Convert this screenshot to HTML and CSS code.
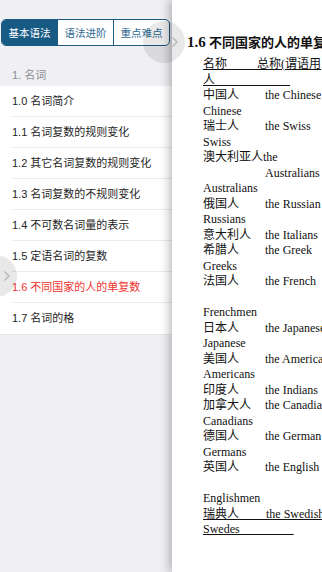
FILE: index.html
```html
<!DOCTYPE html>
<html lang="zh">
<head>
    <meta charset="UTF-8">
    <title>基本语法 - 名词</title>
    <link rel="stylesheet" href="styles.css">
</head>
<body>
    <div class="app">
        <aside class="menu">
            <div class="tabs">
                <span class="tab active">基本语法</span>
                <span class="tab">语法进阶</span>
                <span class="tab">重点难点</span>
            </div>
            <div class="group">1. 名词</div>
            <ul class="list">
                <li>1.0 名词简介</li>
                <li>1.1 名词复数的规则变化</li>
                <li>1.2 其它名词复数的规则变化</li>
                <li>1.3 名词复数的不规则变化</li>
                <li>1.4 不可数名词量的表示</li>
                <li>1.5 定语名词的复数</li>
                <li class="current">1.6 不同国家的人的单复数</li>
                <li>1.7 名词的格</li>
            </ul>
        </aside>

        <main class="page">
            <h2><span class="num">1.6</span> 不同国家的人的单复数</h2>
            <div class="lines">
                <div><span class="u">名称&nbsp;&nbsp;&nbsp;&nbsp;&nbsp;&nbsp;&nbsp;&nbsp;&nbsp;&nbsp;总称(谓语用</span></div>
                <div><span class="u">人&nbsp;&nbsp;&nbsp;&nbsp;&nbsp;&nbsp;&nbsp;&nbsp;&nbsp;&nbsp;&nbsp;&nbsp;&nbsp;&nbsp;&nbsp;&nbsp;&nbsp;&nbsp;&nbsp;&nbsp;&nbsp;&nbsp;&nbsp;&nbsp;&nbsp;</span></div>
                <div><span class="cn">中国人</span>the Chinese</div>
                <div>Chinese</div>
                <div><span class="cn">瑞士人</span>the Swiss</div>
                <div>Swiss</div>
                <div>澳大利亚人the</div>
                <div class="indent">Australians</div>
                <div>Australians</div>
                <div><span class="cn">俄国人</span>the Russian</div>
                <div>Russians</div>
                <div><span class="cn">意大利人</span>the Italians</div>
                <div><span class="cn">希腊人</span>the Greek</div>
                <div>Greeks</div>
                <div><span class="cn">法国人</span>the French</div>
                <div>&nbsp;</div>
                <div>Frenchmen</div>
                <div><span class="cn">日本人</span>the Japanese</div>
                <div>Japanese</div>
                <div><span class="cn">美国人</span>the American</div>
                <div>Americans</div>
                <div><span class="cn">印度人</span>the Indians</div>
                <div><span class="cn">加拿大人</span>the Canadians</div>
                <div>Canadians</div>
                <div><span class="cn">德国人</span>the German</div>
                <div>Germans</div>
                <div><span class="cn">英国人</span>the English</div>
                <div>&nbsp;</div>
                <div>Englishmen</div>
                <div><span class="u">瑞典人&nbsp;&nbsp;&nbsp;&nbsp;&nbsp;&nbsp;&nbsp;&nbsp;&nbsp;the Swedish</span></div>
                <div><span class="u">Swedes&nbsp;&nbsp;&nbsp;&nbsp;&nbsp;&nbsp;&nbsp;&nbsp;&nbsp;&nbsp;&nbsp;&nbsp;&nbsp;&nbsp;&nbsp;&nbsp;&nbsp;&nbsp;</span></div>
            </div>
        </main>

        <!-- drag handles -->
        <span class="handle handle-top">
            <svg width="8" height="12" viewBox="0 0 8 12"><path d="M1.5 1.5 L6 6 L1.5 10.5" fill="none" stroke="#b3b3b3" stroke-width="1.3"/></svg>
        </span>
        <span class="handle handle-side">
            <svg width="8" height="12" viewBox="0 0 8 12"><path d="M1.5 1.5 L6 6 L1.5 10.5" fill="none" stroke="#b3b3b3" stroke-width="1.3"/></svg>
        </span>
    </div>
</body>
</html>
```

FILE: styles.css
```css
html, body {
    margin: 0;
    padding: 0;
}
body {
    font-family: 'Liberation Sans', 'Noto Sans CJK SC', sans-serif;
    background-color: #efeff4;
    overflow: hidden;
}
.app {
    position: relative;
    display: flex;
    width: 322px;
    height: 572px;
    overflow: hidden;
}
.menu {
    flex: none;
    width: 172px;
    background-color: #efeff4;
}
.tabs {
    display: flex;
    margin: 19px 2px 0 1px;
    height: 27px;
    border: 1px solid #1c5b84;
    border-radius: 5px;
    overflow: hidden;
    box-sizing: border-box;
    background-color: white;
}
.tab {
    flex: 1;
    display: flex;
    align-items: center;
    justify-content: center;
    font-size: 10.5px;
    color: #2f6a92;
    border-left: 1px solid #1c5b84;
}
.tab:first-child {
    border-left: none;
}
.tab.active {
    background-color: #175b85;
    color: white;
}
.group {
    height: 40px;
    box-sizing: border-box;
    padding: 22px 0 0 12px;
    font-size: 11px;
    line-height: 14px;
    color: #8e8e93;
}
.list {
    list-style: none;
    margin: 0;
    padding: 0 0 0 12px;
    background-color: white;
    border-bottom: 1px solid #e3e3e6;
}
.list li {
    height: 31px;
    line-height: 31px;
    font-size: 11px;
    color: #1e1e1e;
    border-bottom: 1px solid #ebebed;
    box-sizing: border-box;
}
.list li:last-child {
    border-bottom: none;
}
.list li.current {
    color: #f0322d;
}
.page {
    position: relative;
    flex: 1;
    min-width: 0;
    background-color: white;
    padding-left: 15px;
    white-space: nowrap;
    overflow: hidden;
    box-shadow: -3px 0 9px rgba(0, 0, 0, 0.25);
    font-family: 'Liberation Serif', 'Noto Sans CJK SC', serif;
    color: #111;
}
.page h2 {
    margin: 33px 0 0 0;
    font-size: 13px;
    line-height: 18px;
    font-weight: bold;
}
.page h2 .num {
    font-size: 15px;
}
.lines {
    margin-top: 5px;
    padding-left: 16px;
    font-size: 12px;
    line-height: 15.5px;
}
.cn {
    display: inline-block;
    width: 62px;
}
.indent {
    padding-left: 62px;
}
.u {
    text-decoration: underline;
}
.handle {
    position: absolute;
    width: 42px;
    height: 42px;
    border-radius: 50%;
    background-color: rgba(0, 0, 0, 0.09);
    display: flex;
    align-items: center;
    justify-content: center;
}
.handle svg {
    margin-left: 22px;
}
.handle-top {
    left: 143px;
    top: 21px;
}
.handle-side {
    left: -25px;
    top: 255px;
}
```
